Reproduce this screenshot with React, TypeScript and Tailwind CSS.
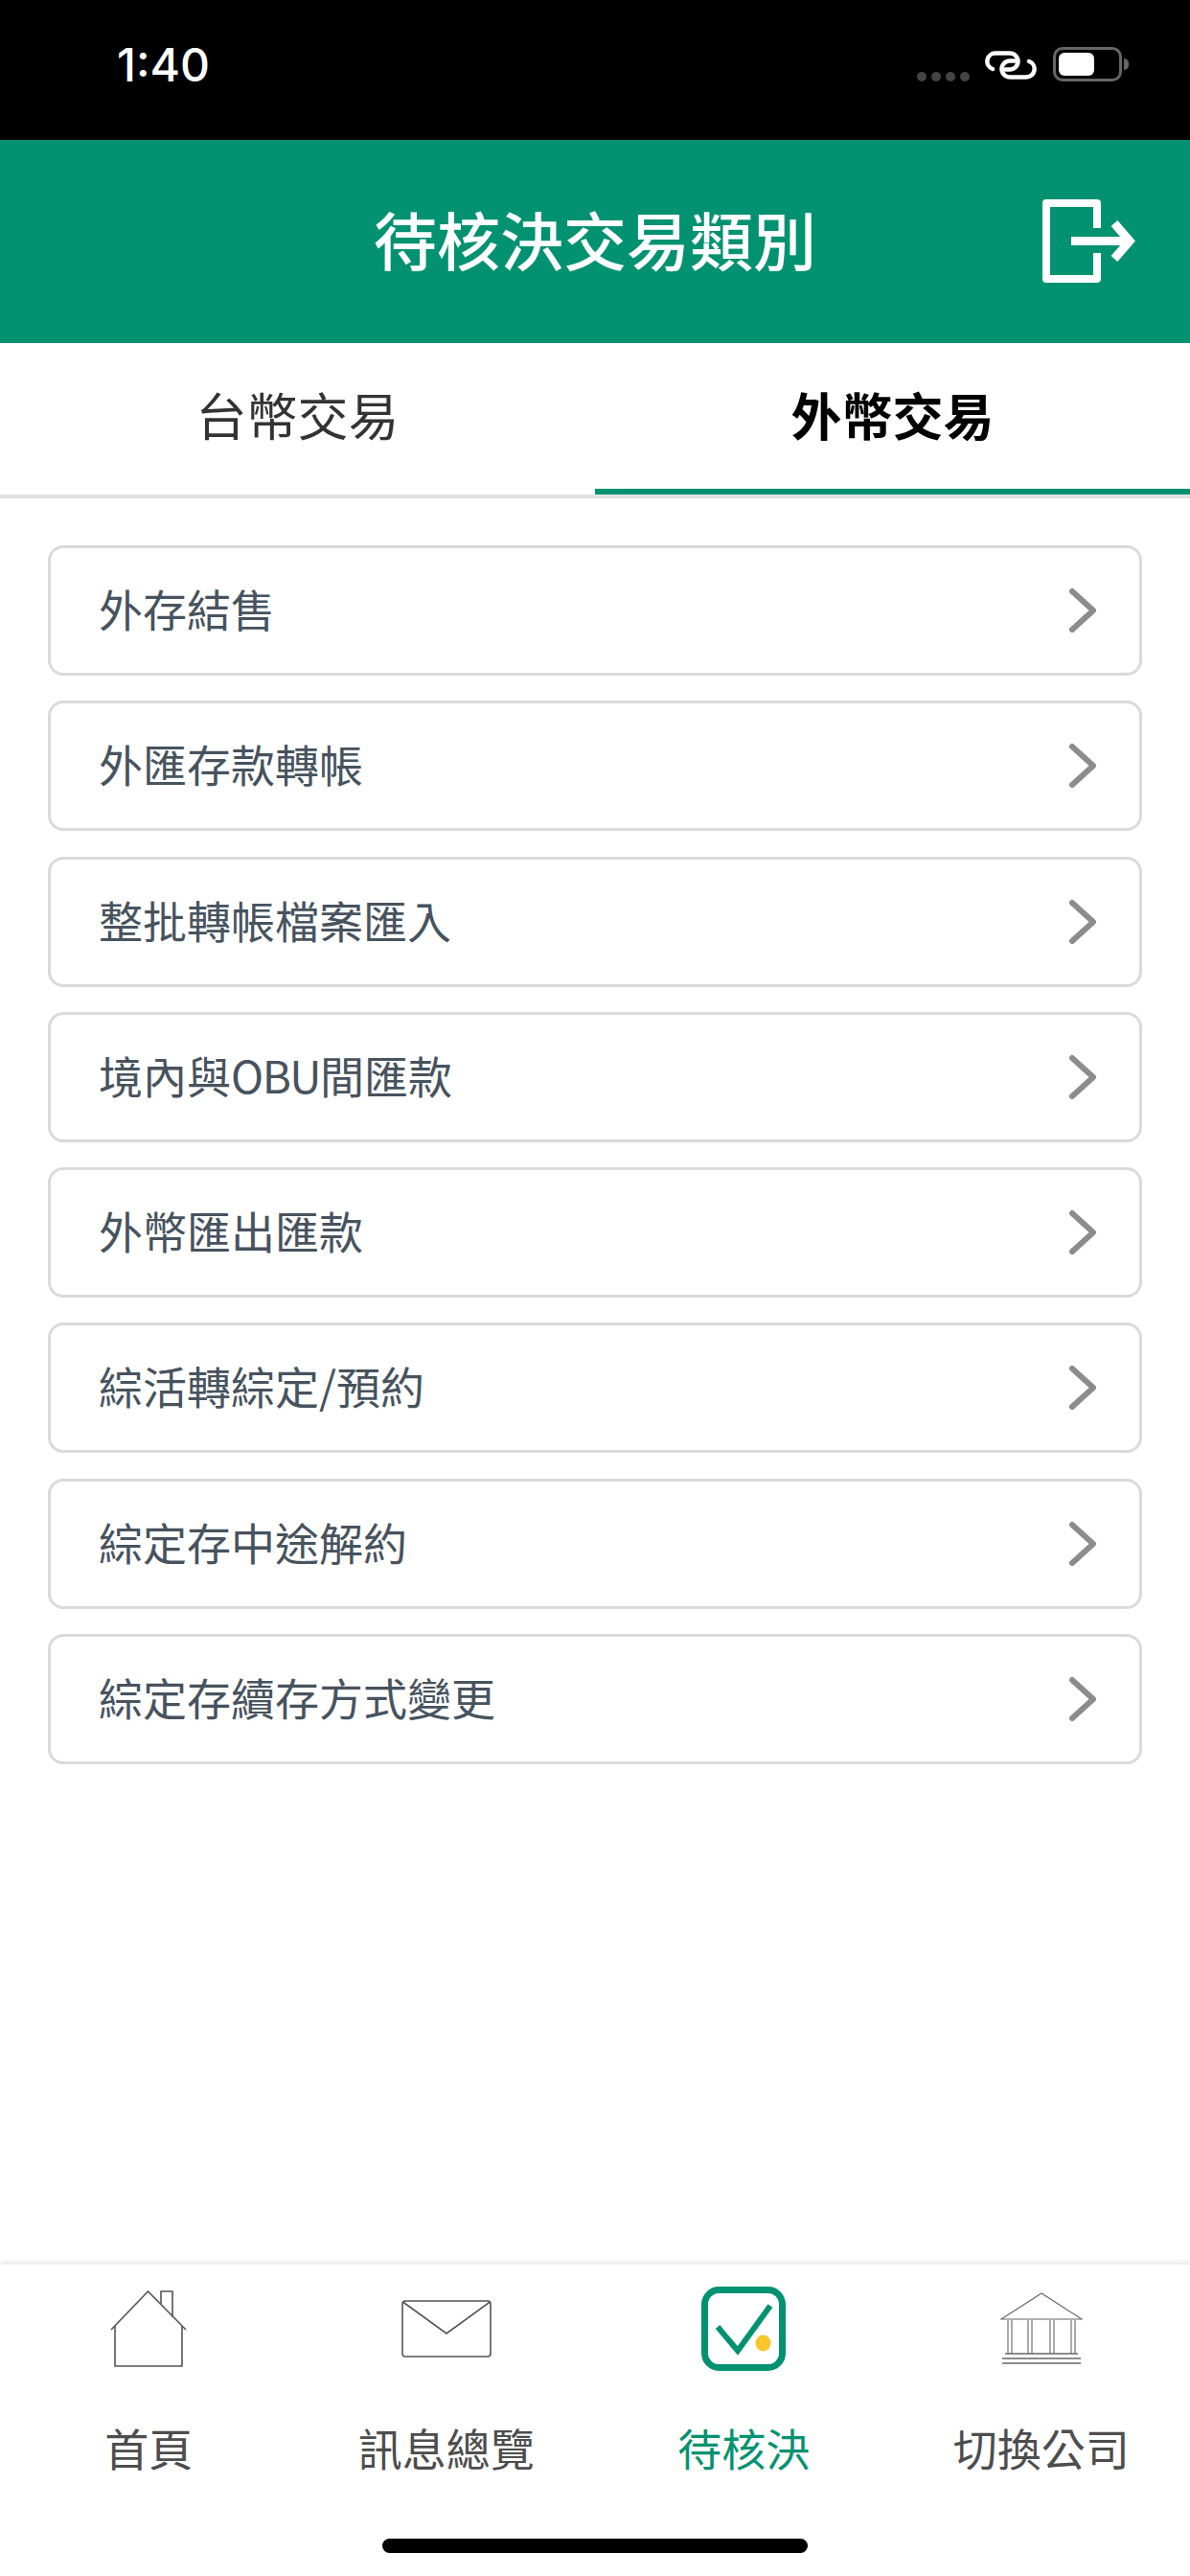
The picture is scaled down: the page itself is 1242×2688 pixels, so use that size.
import React from 'react';

const ITEMS: React.ReactNode[] = [
  '外存結售',
  '外匯存款轉帳',
  '整批轉帳檔案匯入',
  <>境內與<span className="tracking-[-1.5px]">OBU</span>間匯款</>,
  '外幣匯出匯款',
  '綜活轉綜定/預約',
  '綜定存中途解約',
  '綜定存續存方式變更',
];

function StatusBar() {
  return (
    <div className="flex h-[146px] items-start justify-between bg-black pl-[122px] pr-[71px] pt-[40px]">
      <span className="font-['Inter',sans-serif] text-[48px] font-medium leading-[56px] text-white">1:40</span>
      <div className="mt-[9px] flex items-start">
        <div className="mt-[26px] flex gap-[5px]">
          {[0, 1, 2, 3].map((i) => (
            <div key={i} className="h-[10px] w-[10px] rounded-full bg-[#444444]" />
          ))}
        </div>
        <svg width="54" height="31" viewBox="0 0 54 31" fill="none" className="ml-[16px] mt-[4px]">
          <path d="M8 19A8.5 8.5 0 0 1 11 2.5H26A8.5 8.5 0 0 1 26 19.5H21" stroke="#fff" strokeWidth="4.5" strokeLinecap="round" />
          <path d="M46 11A8.5 8.5 0 0 1 43 27.5H26A8.5 8.5 0 0 1 26 10.5H33" stroke="#fff" strokeWidth="4.5" strokeLinecap="round" />
        </svg>
        <div className="relative ml-[17px] h-[36px] w-[72px] rounded-[10px] border-[3px] border-[#666666] p-[3px]">
          <div className="h-[24px] w-[37px] rounded-[6px] bg-white" />
          <div className="absolute right-[-10px] top-[9px] h-[12px] w-[5px] rounded-r-full bg-[#666666]" />
        </div>
      </div>
    </div>
  );
}

function Header() {
  return (
    <div className="relative flex h-[212px] items-center justify-center bg-[#039271] pb-[8px]">
      <h1 className="text-[66px] font-medium leading-[80px] text-white">待核決交易類別</h1>
      <svg width="97" height="88" viewBox="0 0 97 88" fill="none" className="absolute left-[1088px] top-[62px]">
        <path d="M57 30V4H4V83H57V56" stroke="#fff" strokeWidth="8" strokeLinejoin="round" />
        <path d="M30 43.5H90" stroke="#fff" strokeWidth="9" />
        <path d="M75 25L91 43.5L75 62" stroke="#fff" strokeWidth="9" />
      </svg>
    </div>
  );
}

function Tabs() {
  return (
    <div className="grid h-[162px] grid-cols-2 border-b-4 border-[#e2e2e2]">
      <div className="flex items-center justify-center pb-[9px] text-[53px] text-[#333333]">台幣交易</div>
      <div className="flex items-center justify-center border-b-[6px] border-[#039271] pb-[3px] text-[53px] font-bold text-black">外幣交易</div>
    </div>
  );
}

function ItemRow({ label }: { label: React.ReactNode }) {
  return (
    <div className="flex h-[136px] items-center justify-between rounded-[16px] border-[3px] border-[#dadada] bg-white pl-[50px] pr-[44px]">
      <span className="pb-[6px] text-[46px] leading-[60px] text-[#47535e]">{label}</span>
      <svg width="30" height="48" viewBox="0 0 30 48" fill="none">
        <path d="M4 4L26 24L4 44" stroke="#8c8c8c" strokeWidth="6" strokeLinecap="round" strokeLinejoin="round" />
      </svg>
    </div>
  );
}

function HomeIcon() {
  return (
    <svg width="80" height="80" viewBox="0 0 80 80" fill="none" stroke="#555555" strokeWidth="1.6">
      <path d="M1 41L39.5 1L79 41" />
      <path d="M5 37V79H75V37" />
      <path d="M53 14V1H65V28" />
    </svg>
  );
}

function MailIcon() {
  return (
    <svg width="94" height="60" viewBox="0 0 94 60" fill="none" stroke="#555555" strokeWidth="1.6">
      <rect x="1" y="1" width="92" height="58" rx="3" />
      <path d="M1.5 2L47 35L92.5 2" />
    </svg>
  );
}

function CheckIcon() {
  return (
    <svg width="88" height="88" viewBox="0 0 88 88" fill="none">
      <rect x="3.5" y="3.5" width="81" height="81" rx="15" stroke="#039271" strokeWidth="7" />
      <path d="M17 42L38 67L72 20" stroke="#039271" strokeWidth="6" />
      <ellipse cx="64.5" cy="59" rx="8" ry="8.5" fill="#fbc52d" />
    </svg>
  );
}

function BankIcon() {
  return (
    <svg width="86" height="76" viewBox="0 0 86 76" fill="none" stroke="#666666" strokeWidth="1.1">
      <path d="M1 28L43 1L85 28H1Z" />
      <path d="M8 29V64M12 29V64M29 29V64M33 29V64M52 29V64M56 29V64M74 29V64M78 29V64" />
      <path d="M5 64H81" strokeWidth="1.4" />
      <path d="M2 69H84M2 74H84" strokeWidth="1.4" />
    </svg>
  );
}

const NAV = [
  { label: '首頁', icon: <HomeIcon />, active: false },
  { label: '訊息總覽', icon: <MailIcon />, active: false },
  { label: '待核決', icon: <CheckIcon />, active: true },
  { label: '切換公司', icon: <BankIcon />, active: false },
];

function TabBar() {
  return (
    <div className="flex h-[325px] flex-col items-center bg-white pb-[24px] pt-[23px] shadow-[0_-2px_6px_rgba(0,0,0,0.12)]">
      <div className="grid w-full grid-cols-4">
        {NAV.map((item) => (
          <div key={item.label} className="flex flex-col items-center">
            <div className="flex h-[87px] items-center justify-center">{item.icon}</div>
            <span className={`mt-[57px] text-[46px] leading-[46px] ${item.active ? 'text-[#039271]' : 'text-[#4d4d4d]'}`}>
              {item.label}
            </span>
          </div>
        ))}
      </div>
      <div className="mt-auto h-[15px] w-[444px] rounded-full bg-black" />
    </div>
  );
}

export default function App() {
  return (
    <div className="flex h-[2688px] w-[1242px] flex-col overflow-hidden bg-white font-['Noto_Sans_CJK_TC','Noto_Sans',sans-serif]">
      <StatusBar />
      <Header />
      <Tabs />
      <div className="flex flex-1 flex-col gap-[26.25px] px-[50px] pt-[49px]">
        {ITEMS.map((item, i) => (
          <ItemRow key={i} label={item} />
        ))}
      </div>
      <TabBar />
    </div>
  );
}
